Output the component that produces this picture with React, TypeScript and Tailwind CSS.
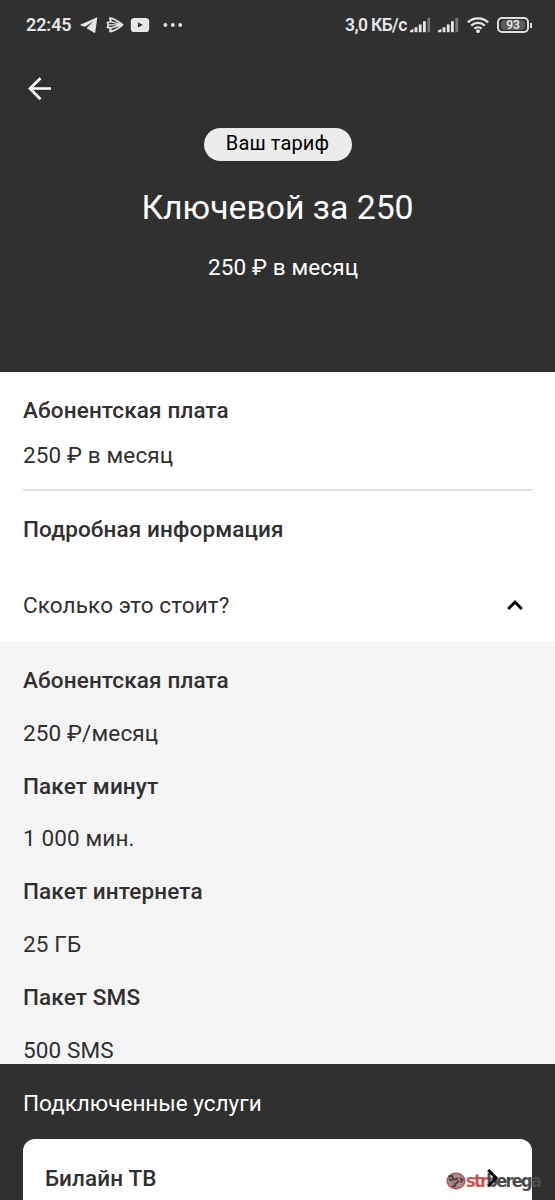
import React from "react";

const details = [
  { title: "Абонентская плата", value: "250 ₽/месяц" },
  { title: "Пакет минут", value: "1 000 мин." },
  { title: "Пакет интернета", value: "25 ГБ" },
  { title: "Пакет SMS", value: "500 SMS" },
];

function SignalIcon() {
  return (
    <svg className="h-4 w-[22px]" viewBox="0 0 22 16" fill="#e6e6e6">
      <path d="M0 15.2v-1.6l3.4-1.8v3.4Z" />
      <rect x="4.6" y="10.2" width="2.8" height="5" />
      <rect x="8.8" y="7.4" width="2.8" height="7.8" />
      <rect x="13" y="4.2" width="2.8" height="11" />
      <rect x="17.4" y="0.8" width="2.8" height="14.4" fill="#777777" />
    </svg>
  );
}

function StatusBar() {
  return (
    <div className="flex h-[50px] items-center justify-between pl-[26px] pr-[23px] text-[#e6e6e6]">
      <div className="flex items-center">
        <span className="w-[54px] text-[18px] font-semibold leading-[22px] tracking-[-0.1px]">22:45</span>
        <svg className="h-[18px] w-[18px]" viewBox="0 0 18 18" fill="#e6e6e6">
          <path d="M17.3 1.3 0.8 8.4c-.6.3-.6.8 0 1l4.4 1.3L13.6 5 7.2 11.4l-.2 1.1 7.2 4.3c.6.3 1 .1 1.1-.6Z" />
        </svg>
        <svg
          className="ml-2 h-[18px] w-[18px]"
          viewBox="0 0 18 18"
          fill="none"
          stroke="#e6e6e6"
          strokeWidth="1.8"
          strokeLinejoin="round"
        >
          <path d="M4 2.2C8 2.5 13 6 16.5 8.8 13 12 8.5 15 4 15.5L4.7 12 1.5 11.3 2.2 8.8 1.5 6.5 4.7 5.7Z" />
          <path d="M4.7 5.7 16 8.8 4.7 12M2.2 8.8H16" strokeWidth="1.3" />
        </svg>
        <svg className="ml-[6px] h-[18px] w-5" viewBox="0 0 20 18">
          <rect x="0.8" y="2" width="18.4" height="14" rx="3.6" fill="#e6e6e6" />
          <path d="M8 6.3v5.2L12.8 9Z" fill="#303030" />
        </svg>
        <svg className="ml-[13px] h-1 w-5" viewBox="0 0 20 4" fill="#e6e6e6">
          <circle cx="2.4" cy="2" r="1.9" />
          <circle cx="9.8" cy="2" r="1.9" />
          <circle cx="17.2" cy="2" r="1.9" />
        </svg>
      </div>
      <div className="flex items-center">
        <span className="w-[65px] whitespace-nowrap text-[17.5px] font-semibold leading-[22px] tracking-[-0.6px]">
          3,0 КБ/с
        </span>
        <SignalIcon />
        <div className="w-[6px]" />
        <SignalIcon />
        <svg className="ml-[7px] h-[18px] w-[22px]" viewBox="0 0 22 18" fill="none" stroke="#e6e6e6" strokeWidth="2.3">
          <path d="M0.9 6.4a14.6 14.6 0 0 1 20.2 0M4.2 9.6a10 10 0 0 1 13.6 0M7.4 12.7a5.5 5.5 0 0 1 7.2 0" />
          <circle cx="11" cy="15.2" r="1.9" fill="#e6e6e6" stroke="none" />
        </svg>
        <div className="ml-[8px] flex h-4 w-[32px] items-center justify-center rounded-[5px] border-2 border-[#dedede]">
          <span className="flex h-[10px] w-[24px] items-center justify-center rounded-sm bg-[#5b5b5b] text-[12px] font-semibold leading-none tracking-normal">
            93
          </span>
        </div>
        <div className="ml-px h-[5px] w-[2px] bg-[#dedede]" />
      </div>
    </div>
  );
}

function Watermark() {
  return (
    <div className="absolute left-[446px] top-[32px] flex items-center">
      <svg className="h-5 w-5" viewBox="0 0 20 20" fill="none">
        <ellipse cx="10" cy="10" rx="8.8" ry="7.8" fill="#a58f8f" stroke="#b0595a" strokeWidth="1.6" />
        <path d="M2.5 5.5 6 5l1.5 3L5 9.5 3 8M8 9l3-1.5 1 3-3 3-2-1.5M14 7l2.5 2-2 2.5M5 14.5l3 1 2-1" stroke="#49393b" strokeWidth="1.8" />
        <path d="m4.5 16 11-11" stroke="#c46466" strokeWidth="1.5" />
      </svg>
      <span className="font-['DejaVu_Sans_Condensed','DejaVu_Sans',sans-serif] text-[18px] font-bold leading-5 tracking-[-1.7px] text-[#4e494b]">
        <span className="text-[#cc5053]">str</span>berega
      </span>
    </div>
  );
}

export default function App() {
  return (
    <div className="flex h-[1200px] w-[555px] flex-col overflow-hidden bg-white font-[Roboto,sans-serif] text-[22.5px] leading-[30px] tracking-[0.13px] text-[#303030]">
      <header className="h-[372px] shrink-0 bg-[#303030] text-white">
        <StatusBar />
        <button className="ml-[27px] mt-[26px] block" aria-label="Назад">
          <svg className="h-[26px] w-[26px]" viewBox="0 0 26 26" fill="none" stroke="white" strokeWidth="2.7">
            <path d="M24 12.5H3M13.5 2.2 3 12.5l10.5 10.8" />
          </svg>
        </button>
        <div className="mt-[26px] flex flex-col items-center">
          <span className="flex h-[33px] w-[148px] justify-center rounded-full bg-[#ececec] text-[20px] leading-[31px] text-black">
            Ваш тариф
          </span>
          <h1 className="mt-[27px] text-[33.75px] leading-10 tracking-normal">Ключевой за 250</h1>
          <p className="mt-[24px] pl-[11px]">250 ₽ в месяц</p>
        </div>
      </header>

      <section className="h-[270px] shrink-0 px-[23px] pt-[23px]">
        <h2 className="font-medium">Абонентская плата</h2>
        <p className="mt-[15px]">250 ₽ в месяц</p>
        <div className="mt-[19px] h-[2px] bg-[#e2e2e2]" />
        <h2 className="mt-[23px] font-medium">Подробная информация</h2>
        <div className="mt-[46px] flex items-center justify-between pr-[9px]">
          <span>Сколько это стоит?</span>
          <svg className="h-4 w-4" viewBox="0 0 16 16" fill="none" stroke="black" strokeWidth="2.9">
            <path d="m1.2 12 6.8-7 6.8 7" />
          </svg>
        </div>
      </section>

      <section className="flex h-[422px] shrink-0 flex-col gap-[22.8px] bg-[#f5f5f5] px-[23px] pt-[23px]">
        {details.map((item) => (
          <React.Fragment key={item.title}>
            <h3 className="font-medium">{item.title}</h3>
            <p>{item.value}</p>
          </React.Fragment>
        ))}
      </section>

      <section className="relative h-[136px] shrink-0 bg-[#303030] px-[23px] pt-6">
        <h2 className="tracking-normal text-white">Подключенные услуги</h2>
        <div className="relative z-10 -ml-[23px] mt-[21px] h-0">
          <Watermark />
        </div>
        <div className="flex h-[61px] items-start justify-between rounded-t-xl bg-white pl-[22px] pr-[34px] pt-6">
          <span className="font-medium">Билайн ТВ</span>
          <svg className="relative z-20 mt-[6px] h-[18px] w-[11px]" viewBox="0 0 11 18" fill="none" stroke="black" strokeWidth="3">
            <path d="m1.2 1 8 8-8 8" />
          </svg>
        </div>
      </section>
    </div>
  );
}
